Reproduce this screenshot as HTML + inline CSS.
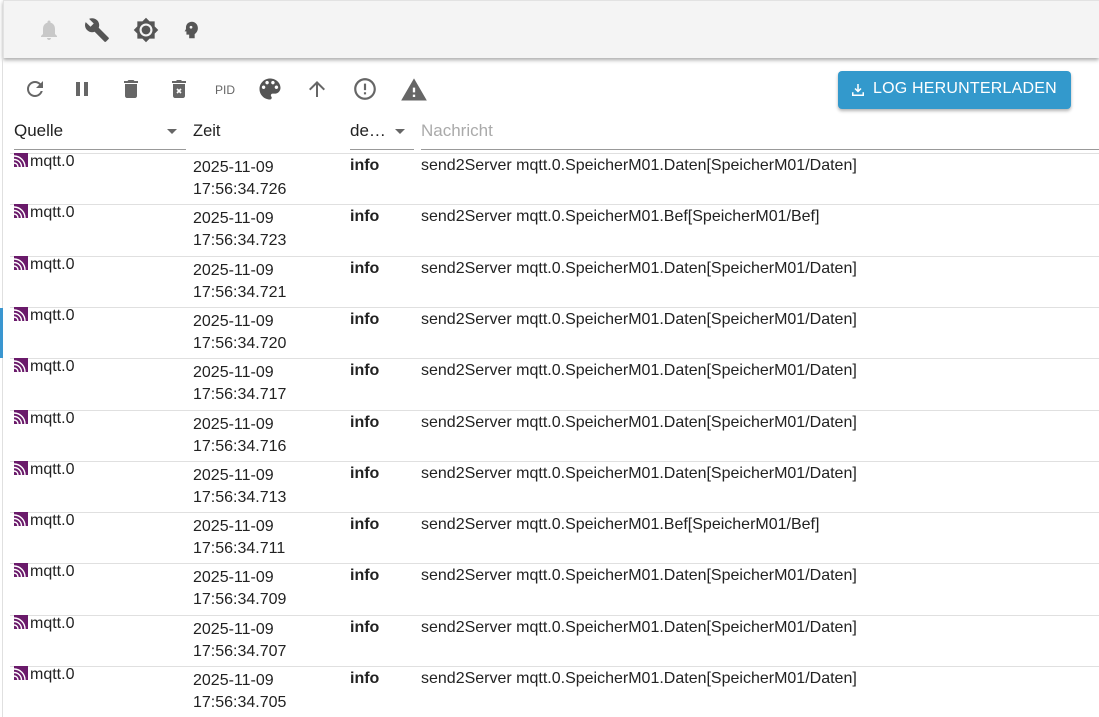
<!DOCTYPE html>
<html><head><meta charset="utf-8"><style>
*{box-sizing:border-box;margin:0;padding:0}
body{width:1099px;height:717px;overflow:hidden;background:#fff;font-family:"Liberation Sans",sans-serif;color:#222;position:relative}
.top{position:absolute;left:3px;top:0;width:1096px;height:58px;background:#f4f4f4;border-top:1px solid #e2e2e2;border-left:1px solid #e2e2e2;box-shadow:0 2px 4px rgba(0,0,0,.35)}
.vl{position:absolute;left:2px;top:58px;width:1px;height:659px;background:#e0e0e0}
.blue{position:absolute;left:0;top:308px;width:3px;height:50px;background:#3a96d0}
svg{position:absolute}
.btn{position:absolute;left:838px;top:71px;width:233px;height:38px;background:#3399cc;border-radius:4px;box-shadow:0 2px 3px rgba(0,0,0,.3);color:#fff;font-size:16px;line-height:36px;padding-left:35px;letter-spacing:.2px}
.h{position:absolute;top:121px;font-size:17px}
.ul{position:absolute;top:149px;height:1px;background:#999}
.row{position:absolute;left:10px;width:1089px;height:51px;border-top:1px solid #e0e0e0;font-size:16px}
.row .s{position:absolute;left:4px;top:-1px;font-size:16px;color:#222}
.row .s i{display:inline-block;width:14px;height:14px;vertical-align:-1px;margin-right:2px}
.row .t{position:absolute;left:183px;top:3px;line-height:22px;font-size:16px}
.row .l{position:absolute;left:340px;top:3px;font-weight:bold}
.row .m{position:absolute;left:411px;top:3px}
</style></head><body>
<div class="top"></div>
<div class="vl"></div><div class="blue"></div>
<svg style="left:37px;top:18px" width="24" height="24" viewBox="0 0 24 24"><path fill="#c8c8c8" d="M12 22c1.1 0 2-.9 2-2h-4c0 1.1.9 2 2 2zm6-6v-5c0-3.070-1.64-5.64-4.5-6.32V4c0-.83-.67-1.5-1.5-1.5s-1.5.67-1.5 1.5v.68C7.630 5.36 6 7.92 6 11v5l-2 2v1h16v-1l-2-2z"/></svg>
<svg style="left:84px;top:17px" width="26" height="26" viewBox="0 0 24 24"><path fill="#555" d="M22.7 19l-9.1-9.1c.9-2.3.4-5-1.5-6.9-2-2-5-2.4-7.4-1.3L9 6 6 9 1.6 4.7C.4 7.1.9 10.1 2.9 12.1c1.9 1.9 4.6 2.4 6.9 1.5l9.1 9.1c.4.4 1 .4 1.4 0l2.3-2.3c.5-.4.5-1.1.1-1.4z"/></svg>
<svg style="left:133px;top:17px" width="26" height="26" viewBox="0 0 24 24"><path fill="#555" d="M20 8.69V4h-4.69L12 .69 8.69 4H4v4.69L.69 12 4 15.31V20h4.69L12 23.310 15.31 20H20v-4.69L23.310 12 20 8.69zM12 18c-3.31 0-6-2.69-6-6s2.690-6 6-6 6 2.69 6 6-2.69 6-6 6zm0-10c-2.21 0-4 1.79-4 4s1.79 4 4 4 4-1.79 4-4-1.79-4-4-4z"/></svg>
<svg style="left:180px;top:18px" width="22" height="24" viewBox="0 0 24 24"><path fill="#555" d="M13 3C9.2 3 6.5 5.8 6.5 9.3c0 .9.2 1.6-.5 2.7L5 13.5h2V17h3v4h6v-4.5c2-1.3 3.5-3.6 3.5-6.5C19.5 6 16.6 3 13 3zm-1 7.5a1.5 1.5 0 1 1 0-3 1.5 1.5 0 0 1 0 3z"/></svg>
<svg style="left:23px;top:77px" width="24" height="24" viewBox="0 0 24 24"><path fill="#666" d="M17.65 6.35C16.2 4.9 14.21 4 12 4c-4.42 0-7.99 3.58-7.99 8s3.57 8 7.99 8c3.73 0 6.84-2.55 7.73-6h-2.08c-.82 2.33-3.04 4-5.65 4-3.31 0-6-2.69-6-6s2.69-6 6-6c1.66 0 3.14.69 4.22 1.78L13 11h7V4l-2.35 2.35z"/></svg>
<svg style="left:70px;top:77px" width="24" height="24" viewBox="0 0 24 24"><path fill="#666" d="M6 19h4V5H6v14zm8-14v14h4V5h-4z"/></svg>
<svg style="left:119px;top:77px" width="24" height="24" viewBox="0 0 24 24"><path fill="#666" d="M6 19c0 1.1.9 2 2 2h8c1.1 0 2-.9 2-2V7H6v12zM19 4h-3.5l-1-1h-5l-1 1H5v2h14V4z"/></svg>
<svg style="left:167px;top:77px" width="24" height="24" viewBox="0 0 24 24"><path fill="#666" d="M15 4h4v2H5V4h4l1-1h4zM6 7h12v12c0 1.1-.9 2-2 2H8c-1.1 0-2-.9-2-2z"/><path stroke="#fff" stroke-width="1.6" d="M10 12l4 4M14 12l-4 4"/></svg>
<div style="position:absolute;left:215px;top:83px;font-size:12px;color:#666">PID</div>
<svg style="left:256px;top:75px" width="28" height="28" viewBox="0 0 24 24"><path fill="#555" d="M12 3c-4.97 0-9 4.03-9 9s4.03 9 9 9c.83 0 1.5-.67 1.5-1.5 0-.39-.15-.74-.39-1.01-.23-.26-.38-.61-.38-.99 0-.83.67-1.5 1.5-1.5H16c2.76 0 5-2.24 5-5 0-4.42-4.03-8-9-8zm-5.5 9c-.83 0-1.5-.67-1.5-1.5S5.670 9 6.5 9 8 9.67 8 10.5 7.33 12 6.5 12zm3-4C8.67 8 8 7.33 8 6.5S8.67 5 9.5 5s1.5.67 1.5 1.5S10.33 8 9.5 8zm5 0c-.83 0-1.5-.67-1.5-1.5S13.67 5 14.5 5s1.5.67 1.5 1.5S15.33 8 14.5 8zm3 4c-.83 0-1.5-.67-1.5-1.5S16.67 9 17.5 9s1.5.67 1.5 1.5-.67 1.5-1.5 1.5z"/></svg>
<svg style="left:305px;top:77px" width="24" height="24" viewBox="0 0 24 24"><path fill="#666" d="M4 12l1.41 1.41L11 7.83V20h2V7.83l5.58 5.59L20 12l-8-8-8 8z"/></svg>
<svg style="left:352px;top:76px" width="26" height="26" viewBox="0 0 24 24"><path fill="#666" d="M11 15h2v2h-2zm0-8h2v6h-2zm1-5C6.47 2 2 6.5 2 12s4.47 10 10 10 10-4.5 10-10S17.52 2 12 2zm0 18c-4.42 0-8-3.58-8-8s3.58-8 8-8 8 3.58 8 8-3.58 8-8 8z"/></svg>
<svg style="left:400px;top:76px" width="28" height="28" viewBox="0 0 24 24"><path fill="#666" d="M1 21h22L12 2 1 21zm12-3h-2v-2h2v2zm0-4h-2v-4h2v4z"/></svg>
<div class="btn">LOG HERUNTERLADEN</div>
<svg style="left:849px;top:81px" width="18" height="18" viewBox="0 0 24 24"><path fill="none" stroke="#fff" stroke-width="2" d="M12 4v10M8 10l4 4 4-4M5 15v4h14v-4"/></svg>
<div class="h" style="left:14px">Quelle</div>
<svg style="left:166px;top:128px" width="12" height="8"><path fill="#666" d="M1 1h10L6 6z"/></svg>
<div class="ul" style="left:14px;width:172px"></div>
<div class="h" style="left:193px;font-size:16.5px;top:122px">Zeit</div>
<div class="h" style="left:350px">de…</div>
<svg style="left:394px;top:128px" width="12" height="8"><path fill="#666" d="M1 1h10L6 6z"/></svg>
<div class="ul" style="left:350px;width:64px"></div>
<div class="h" style="left:421px;color:#aaa;font-size:17px;top:121px">Nachricht</div>
<div class="ul" style="left:421px;width:678px"></div>
<div id="rows"></div>
<script>
var d=[["726","Daten"],["723","Bef"],["721","Daten"],["720","Daten"],["717","Daten"],["716","Daten"],["713","Daten"],["711","Bef"],["709","Daten"],["707","Daten"],["705","Daten"]];
var h="";
var ic='<i><svg width="14" height="14" viewBox="0 0 14 14" style="position:static"><rect width="14" height="14" fill="#6a1a6a"/><path fill="none" stroke="#fff" stroke-width="1.4" d="M0 3a11 11 0 0 1 11 11M0 6.5a7.5 7.5 0 0 1 7.5 7.5M0 10a4 4 0 0 1 4 4"/></svg></i>';
for(var i=0;i<d.length;i++){var t=153+i*51.3;
h+='<div class="row" style="top:'+t+'px"><div class="s">'+ic+'mqtt.0</div><div class="t">2025-11-09<br>17:56:34.'+d[i][0]+'</div><div class="l">info</div><div class="m">send2Server mqtt.0.SpeicherM01.'+d[i][1]+'[SpeicherM01/'+d[i][1]+']</div></div>';}
document.getElementById("rows").innerHTML=h;
</script>
</body></html>
